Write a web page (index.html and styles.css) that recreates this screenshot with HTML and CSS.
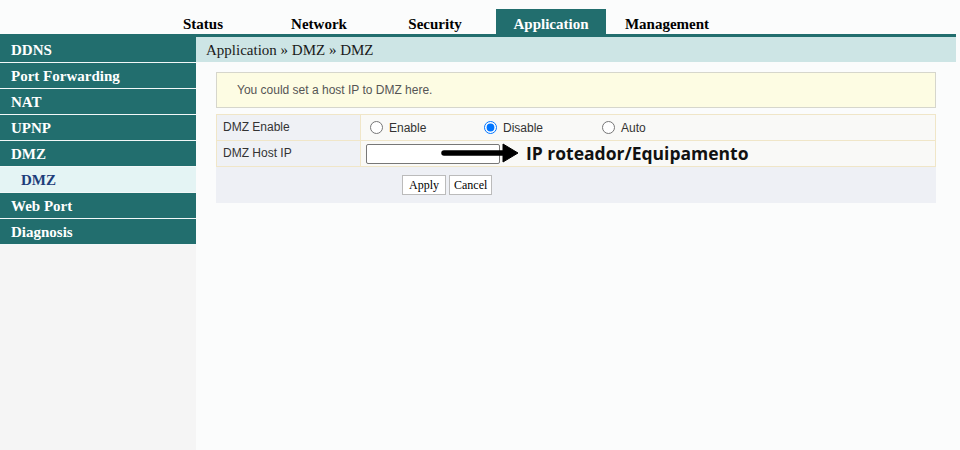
FILE: index.html
```html
<!DOCTYPE html>
<html>
<head>
<meta charset="utf-8">
<link rel="stylesheet" href="styles.css">
</head>
<body>
<div class="topnav">
  <div class="tab">Status</div>
  <div class="tab">Network</div>
  <div class="tab">Security</div>
  <div class="tab active">Application</div>
  <div class="tab">Management</div>
</div>
<div class="rule"></div>
<div class="main">
  <div class="sidebar">
    <div class="item">DDNS</div>
    <div class="item">Port Forwarding</div>
    <div class="item">NAT</div>
    <div class="item">UPNP</div>
    <div class="item">DMZ</div>
    <div class="item sub">DMZ</div>
    <div class="item">Web Port</div>
    <div class="item">Diagnosis</div>
  </div>
  <div class="content">
    <div class="crumb">Application » DMZ » DMZ</div>
    <div class="panel">
      <div class="info">You could set a host IP to DMZ here.</div>
      <div class="table">
        <div class="row">
          <div class="label">DMZ Enable</div>
          <div class="value">
            <label class="opt w1"><input type="radio" name="dmz">Enable</label>
            <label class="opt w2"><input type="radio" name="dmz" checked>Disable</label>
            <label class="opt"><input type="radio" name="dmz">Auto</label>
          </div>
        </div>
        <div class="row">
          <div class="label">DMZ Host IP</div>
          <div class="value"><input class="ip" type="text"></div>
        </div>
      </div>
      <div class="buttons">
        <button class="btn">Apply</button>
        <button class="btn btn-narrow">Cancel</button>
      </div>
      <div class="note">
        <svg class="arrow" width="80" height="20" viewBox="0 0 80 20">
          <line x1="3" y1="10" x2="64" y2="10" stroke="#000" stroke-width="5.5" stroke-linecap="round"/>
          <polygon points="62,1 77,10 62,19" fill="#000" stroke="#000" stroke-width="1" stroke-linejoin="round"/>
        </svg>
        <span class="note-text">IP roteador/Equipamento</span>
      </div>
    </div>
  </div>
</div>
</body>
</html>
```

FILE: styles.css
```css
html, body {
  margin: 0;
  padding: 0;
  background: #fbfcfc;
  height: 100%;
}
body {
  font-family: "Liberation Serif", "Times New Roman", serif;
  overflow: hidden;
}
.topnav {
  display: flex;
  align-items: flex-end;
  height: 34px;
  padding-left: 148px;
  gap: 6px;
}
.tab {
  width: 110px;
  height: 25px;
  line-height: 30px;
  text-align: center;
  font-weight: bold;
  font-size: 15px;
  color: #000;
}
.tab.active {
  background: #226e6e;
  color: #fff;
}
.rule {
  height: 3px;
  background: #226e6e;
  margin-right: 4px;
}
.main {
  display: flex;
  height: 413px;
}
.sidebar {
  width: 196px;
  background: #f5f5f5;
}
.item {
  height: 25px;
  line-height: 27px;
  border-bottom: 1px solid #f2f8f8;
  background: #226e6e;
  color: #fff;
  font-weight: bold;
  font-size: 15px;
  padding-left: 11px;
}
.item.sub {
  background: #e4f4f4;
  color: #1d3d7a;
  padding-left: 21px;
}
.content {
  flex: 1;
  margin-right: 4px;
}
.crumb {
  height: 25px;
  line-height: 26px;
  background: #cde5e5;
  padding-left: 10px;
  font-size: 15px;
  color: #1a1a1a;
}
.panel {
  position: relative;
  padding: 10px 20px 0 20px;
  font-family: "Liberation Sans", Arial, sans-serif;
  font-size: 12px;
  color: #333;
}
.info {
  height: 34px;
  line-height: 35px;
  background: #fdfce3;
  border: 1px solid #d6d6cc;
  padding-left: 20px;
  color: #555;
}
.table {
  margin-top: 6px;
  border-top: 1px solid #f0e6c8;
}
.row {
  display: flex;
  height: 25px;
  border-bottom: 1px solid #f0e6c8;
  border-left: 1px solid #f0e6c8;
  border-right: 1px solid #f0e6c8;
}
.label {
  width: 137px;
  padding-left: 6px;
  line-height: 24px;
  background: #eff1f5;
  border-right: 1px solid #f0e6c8;
}
.value {
  flex: 1;
  display: flex;
  align-items: center;
  padding-left: 5px;
  background: #f9f9f7;
}
.opt {
  display: flex;
  align-items: center;
}
.opt input {
  margin: 0 6px 0 4px;
  width: 13px;
  height: 13px;
}
.w1 { width: 114px; }
.w2 { width: 118px; }
.ip {
  width: 130px;
  height: 16px;
  padding: 1px;
  border: 1px solid #777;
  border-radius: 2px;
  background: #fff;
  box-sizing: content-box;
  margin: 0;
}
.buttons {
  height: 36px;
  background: #eef0f5;
  display: flex;
  align-items: center;
  gap: 3px;
  padding-left: 186px;
}
.btn {
  height: 20px;
  padding: 0 6px;
  font-family: "Liberation Serif", "Times New Roman", serif;
  font-size: 12px;
  color: #000;
  background: #fff;
  border: 1px solid #bbb;
  border-radius: 0;
}
.btn-narrow {
  padding: 0 4px;
}
.note {
  position: absolute;
  left: 245px;
  top: 79px;
  display: flex;
  align-items: center;
  gap: 5px;
}
.note-text {
  font-family: "Open Sans", sans-serif;
  font-weight: bold;
  font-size: 17.5px;
  color: #111;
}
```
